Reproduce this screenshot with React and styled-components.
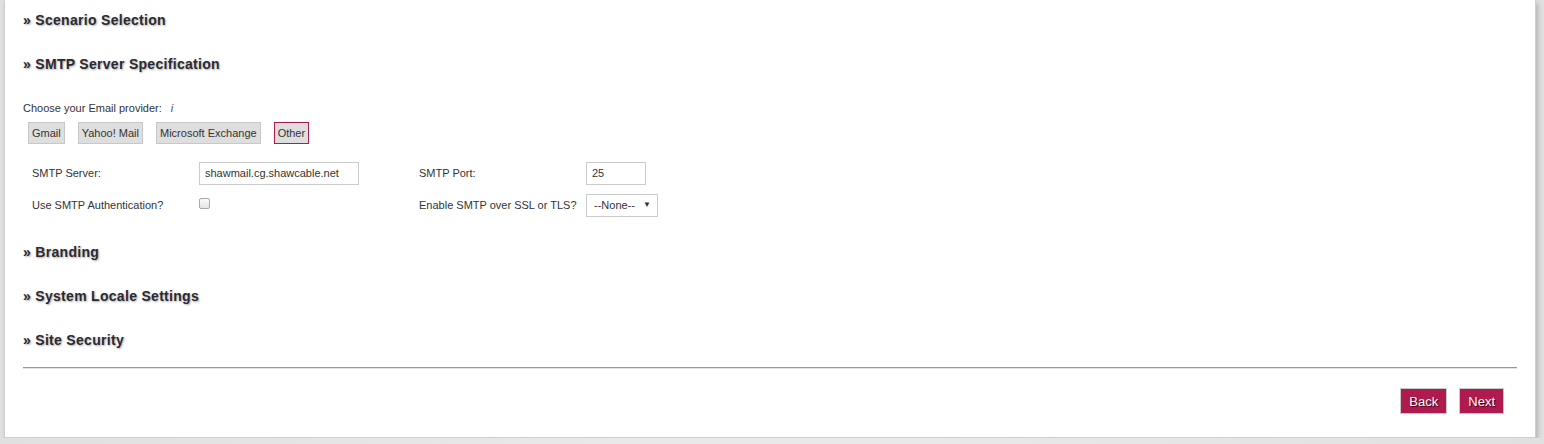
import React, { useState } from 'react'
import styled, { createGlobalStyle } from 'styled-components'

const GlobalStyle = createGlobalStyle`
  html, body {
    margin: 0;
    padding: 0;
    background: linear-gradient(to right, #e0e0e0, #e9e9e9 40%, #e9e9e9 60%, #e0e0e0);
    font-family: "Liberation Sans", Arial, sans-serif;
    color: #333;
  }
`

const providers = ['Gmail', 'Yahoo! Mail', 'Microsoft Exchange', 'Other']
const sections = ['Branding', 'System Locale Settings', 'Site Security']

function App() {
  const [provider, setProvider] = useState('Other')
  const [auth, setAuth] = useState(false)

  return (
    <>
      <GlobalStyle />
      <Card>
        <Heading>» Scenario Selection</Heading>
        <Heading>» SMTP Server Specification</Heading>

        <Prompt>
          Choose your Email provider: <Info>i</Info>
        </Prompt>
        <ProviderRow>
          {providers.map((p) => (
            <ProviderButton key={p} $active={provider === p} onClick={() => setProvider(p)}>
              {p}
            </ProviderButton>
          ))}
        </ProviderRow>

        <FormGrid>
          <Label>SMTP Server:</Label>
          <Field><TextInput defaultValue="shawmail.cg.shawcable.net" $width={160} /></Field>
          <Label>SMTP Port:</Label>
          <Field><TextInput defaultValue="25" $width={60} /></Field>

          <Label>Use SMTP Authentication?</Label>
          <Field>
            <Check type="checkbox" checked={auth} onChange={(e) => setAuth(e.target.checked)} />
          </Field>
          <Label>Enable SMTP over SSL or TLS?</Label>
          <Field>
            <SelectWrap>
              <Select defaultValue="none">
                <option value="none">--None--</option>
                <option value="ssl">SSL</option>
                <option value="tls">TLS</option>
              </Select>
            </SelectWrap>
          </Field>
        </FormGrid>

        {sections.map((s) => (
          <Heading key={s}>» {s}</Heading>
        ))}

        <Divider />

        <Footer>
          <NavButton>Back</NavButton>
          <NavButton>Next</NavButton>
        </Footer>
      </Card>
    </>
  )
}

const Card = styled.div`
  margin: 0 8px 0 4px;
  padding: 0 18px 24px 18px;
  background: #fff;
  border: 1px solid #cfcfcf;
  border-top: none;
  box-shadow: 2px 3px 5px rgba(0, 0, 0, 0.2);
  height: 438px;
  box-sizing: border-box;
`

const Heading = styled.h3`
  margin: 0;
  padding: 11px 0 15px;
  font-size: 14px;
  line-height: 18px;
  font-weight: bold;
  letter-spacing: 0.3px;
  color: #2a2a32;
  text-shadow: 1px 1px 2px #aaa;
`

const Prompt = styled.div`
  margin-top: 13px;
  font-size: 11px;
  line-height: 14px;
  color: #333;
`

const Info = styled.i`
  margin-left: 6px;
  color: #3c4d8c;
`

const ProviderRow = styled.div`
  display: flex;
  gap: 13px;
  margin: 7px 0 0 5px;
`

const ProviderButton = styled.button`
  height: 22px;
  padding: 0 3px;
  font-family: inherit;
  font-size: 11px;
  color: #333;
  background: #dedede;
  border: 1px solid ${(p) => (p.$active ? '#b01b4f' : '#c8c8c8')};
  cursor: pointer;
`

const FormGrid = styled.div`
  display: grid;
  grid-template-columns: 167px 220px 167px auto;
  grid-auto-rows: 22px;
  row-gap: 10px;
  margin: 18px 0 16px 9px;
  align-items: center;
`

const Label = styled.div`
  font-size: 11px;
  color: #333;
`

const Field = styled.div`
  display: flex;
  align-items: center;
  height: 22px;
`

const TextInput = styled.input`
  box-sizing: border-box;
  width: ${(p) => p.$width}px;
  height: 23px;
  padding: 0 5px;
  font-family: inherit;
  font-size: 11px;
  color: #333;
  border: 1px solid #ccc;
  outline: none;
`

const Check = styled.input`
  appearance: none;
  width: 11px;
  height: 11px;
  margin: 0 0 3px 0;
  border: 1px solid #a8a8a8;
  border-radius: 2px;
  background: linear-gradient(#fafafa, #e4e4e4);
  &:checked {
    background: #b01b4f;
  }
`

const SelectWrap = styled.div`
  position: relative;
  &::after {
    content: '▼';
    position: absolute;
    right: 7px;
    top: 6px;
    font-size: 8px;
    color: #333;
    pointer-events: none;
  }
`

const Select = styled.select`
  appearance: none;
  box-sizing: border-box;
  width: 72px;
  height: 23px;
  padding: 0 7px;
  font-family: inherit;
  font-size: 11px;
  color: #333;
  background: #fff;
  border: 1px solid #ccc;
  border-radius: 0;
  outline: none;
`

const Divider = styled.hr`
  margin: 3px 0 0;
  border: none;
  border-top: 1px solid #9a9a9a;
  border-bottom: 1px solid #e4e4e4;
`

const Footer = styled.div`
  display: flex;
  justify-content: flex-end;
  gap: 12px;
  margin: 19px 13px 0 0;
`

const NavButton = styled.button`
  height: 26px;
  padding: 0 8px;
  font-family: inherit;
  font-size: 13px;
  color: #fff;
  background: #b01b4f;
  border: 1px solid #c9c9c9;
  text-shadow: 1px 1px 1px #3a0018;
  cursor: pointer;
`

export default App
